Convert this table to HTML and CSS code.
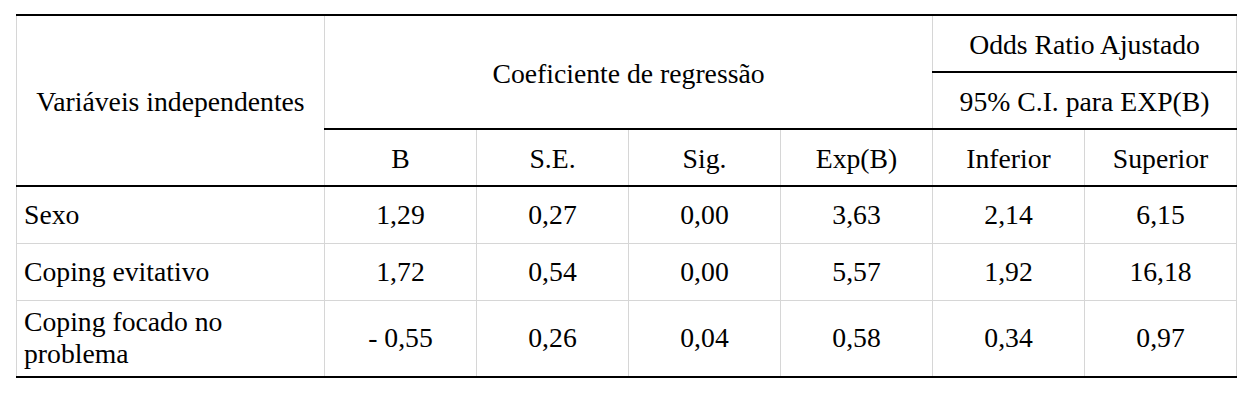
FILE: index.html
```html
<!DOCTYPE html>
<html>
<head>
  <title>Regressão logística</title>
  <link rel="stylesheet" href="styles.css">
</head>
<body>
  <table class="results">
    <colgroup>
      <col class="col-var">
      <col class="col-num">
      <col class="col-num">
      <col class="col-num">
      <col class="col-num">
      <col class="col-num">
      <col class="col-num">
    </colgroup>
    <thead>
      <tr class="row-top">
        <th rowspan="3" class="var-head">Variáveis independentes</th>
        <th colspan="4" rowspan="2">Coeficiente de regressão</th>
        <th colspan="2">Odds Ratio Ajustado</th>
      </tr>
      <tr>
        <th colspan="2" class="dark-top">95% C.I. para EXP(B)</th>
      </tr>
      <tr class="row-sub">
        <th class="dark-top">B</th>
        <th class="dark-top">S.E.</th>
        <th class="dark-top">Sig.</th>
        <th class="dark-top">Exp(B)</th>
        <th class="dark-top">Inferior</th>
        <th class="dark-top">Superior</th>
      </tr>
    </thead>
    <tbody>
      <tr>
        <td class="name">Sexo</td>
        <td>1,29</td>
        <td>0,27</td>
        <td>0,00</td>
        <td>3,63</td>
        <td>2,14</td>
        <td>6,15</td>
      </tr>
      <tr>
        <td class="name">Coping evitativo</td>
        <td>1,72</td>
        <td>0,54</td>
        <td>0,00</td>
        <td>5,57</td>
        <td>1,92</td>
        <td>16,18</td>
      </tr>
      <tr class="row-tall">
        <td class="name">Coping focado no<br>problema</td>
        <td>- 0,55</td>
        <td>0,26</td>
        <td>0,04</td>
        <td>0,58</td>
        <td>0,34</td>
        <td>0,97</td>
      </tr>
    </tbody>
  </table>
</body>
</html>
```

FILE: styles.css
```css
body {
  margin: 0;
  padding: 14px 0 0 16px;
  background: #ffffff;
  color: #000000;
}
.results {
  border-collapse: collapse;
  width: 1219px;
  table-layout: fixed;
  font-family: "Liberation Serif", "Times New Roman", serif;
  font-size: 27.7px;
  border-top: 2px solid #000000;
  border-bottom: 2px solid #000000;
}
.col-var {
  width: 308px;
}
.col-num {
  width: 152px;
}
.results th,
.results td {
  border: 1px solid #d6d6d6;
  font-weight: normal;
  text-align: center;
  vertical-align: middle;
  padding: 0 7px;
  line-height: 1.15;
}
.results th {
  padding-top: 3px;
}
.results tr {
  height: 57px;
}
.results .row-tall {
  height: 77px;
}
.results .dark-top {
  border-top: 2px solid #000000;
}
.results tbody tr:first-child td {
  border-top: 2px solid #000000;
}
.results td.name {
  text-align: left;
}
.results tbody tr:last-child td {
  border-bottom: 2px solid #000000;
}
```
